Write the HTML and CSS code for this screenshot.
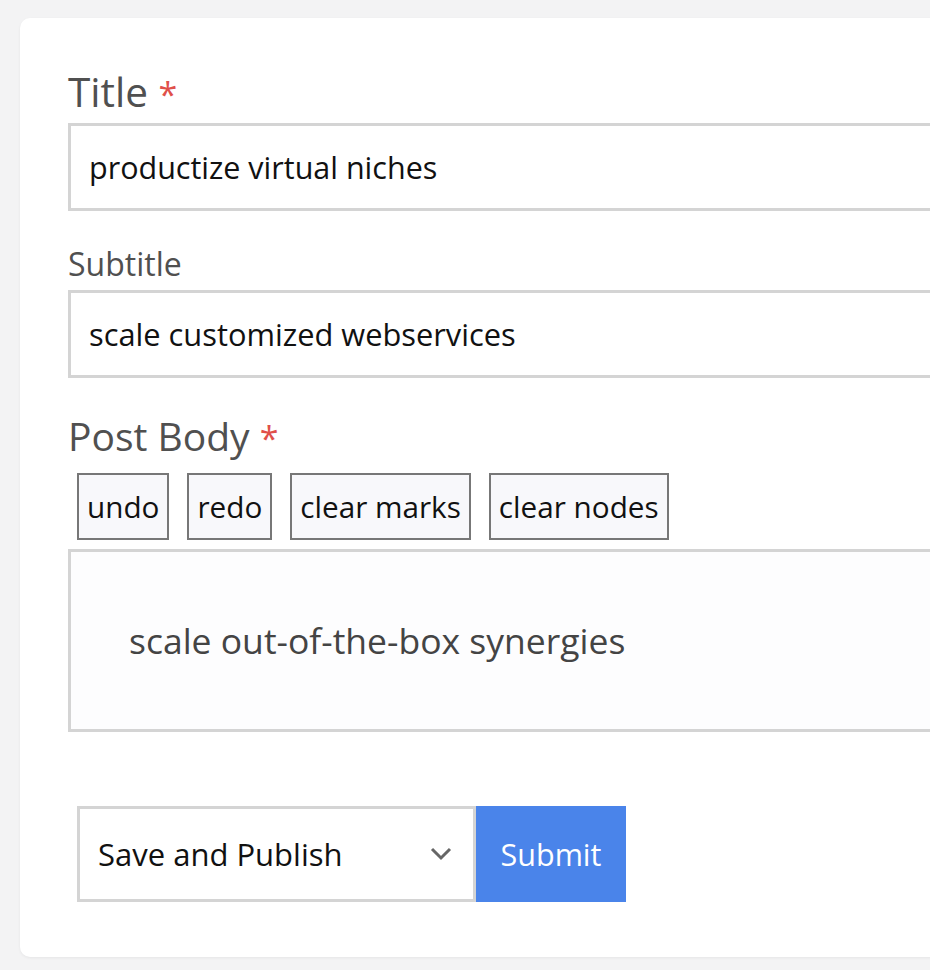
FILE: index.html
```html
<!DOCTYPE html>
<html>
<head>
<meta charset="utf-8">
<link rel="stylesheet" href="styles.css">
</head>
<body>
<div class="card">
  <form class="form">
    <div class="field">
      <label class="label label-lg">Title <span class="req">*</span></label>
      <div class="input">productize virtual niches</div>
    </div>
    <div class="field">
      <label class="label label-sm">Subtitle</label>
      <div class="input input-sub">scale customized webservices</div>
    </div>
    <div class="field">
      <label class="label label-lg label-body">Post Body <span class="req">*</span></label>
      <div class="toolbar">
        <button type="button" class="tool">undo</button>
        <button type="button" class="tool">redo</button>
        <button type="button" class="tool">clear marks</button>
        <button type="button" class="tool">clear nodes</button>
      </div>
      <div class="editor"><p class="editor-text">scale out-of-the-box synergies</p></div>
    </div>
    <div class="actions">
      <div class="select">
        <span>Save and Publish</span>
        <svg class="chev" width="24" height="16" viewBox="0 0 24 16"><polyline points="3,3 12,12 21,3" fill="none" stroke="#666" stroke-width="3"/></svg>
      </div>
      <button type="button" class="submit">Submit</button>
    </div>
  </form>
</div>
</body>
</html>
```

FILE: styles.css
```css
html, body {
  margin: 0;
  padding: 0;
  overflow: hidden;
}
body {
  background: #f3f3f4;
  font-family: "Open Sans", "Lato", sans-serif;
  padding: 18px 0 0 20px;
  height: 970px;
  box-sizing: border-box;
}
.card {
  width: 1000px;
  height: 939px;
  background: #fff;
  border-radius: 10px 0 0 10px;
  box-shadow: 0 1px 3px rgba(0,0,0,0.06);
  box-sizing: border-box;
  padding: 54px 0 0 48px;
}
.form {
  display: flex;
  flex-direction: column;
}
.field {
  display: flex;
  flex-direction: column;
}
.label {
  color: #505050;
  line-height: 1;
  display: block;
}
.label-lg {
  font-size: 40.5px;
  margin-bottom: 10px;
}
.label-sm {
  font-size: 32px;
  margin-top: 37px;
  margin-bottom: 10px;
}
.req {
  color: #e0504a;
  font-size: 34px;
}
.input {
  border: 3px solid #d4d4d4;
  height: 88px;
  box-sizing: border-box;
  display: flex;
  align-items: center;
  padding-left: 18px;
  font-size: 30.5px;
  color: #111;
  width: 950px;
}
.input-sub {
  font-size: 30.8px;
}
.label-body {
  font-size: 39px;
  margin-top: 38px;
  margin-bottom: 18px;
}
.toolbar {
  display: flex;
  gap: 18px;
  padding-left: 9px;
  margin-bottom: 9px;
}
.tool {
  font-family: inherit;
  font-size: 29.7px;
  color: #111;
  background: #f8f8fb;
  border: 2px solid #777;
  height: 67px;
  padding: 0 8px;
  margin: 0;
}
.editor {
  border: 3px solid #d4d4d4;
  background: #fdfdfe;
  height: 183px;
  box-sizing: border-box;
  width: 950px;
  display: flex;
  align-items: center;
  padding-left: 58px;
}
.editor-text {
  margin: 0;
  font-size: 35.5px;
  color: #444;
}
.actions {
  display: flex;
  margin-top: 74px;
  padding-left: 9px;
}
.select {
  width: 399px;
  height: 96px;
  box-sizing: border-box;
  border: 3px solid #d4d4d4;
  display: flex;
  align-items: center;
  justify-content: space-between;
  padding: 0 20px 0 18px;
  font-size: 31px;
  color: #111;
}
.chev {
  display: block;
}
.submit {
  font-family: inherit;
  width: 150px;
  height: 96px;
  border: none;
  background: #4a84ea;
  color: #fff;
  font-size: 30.5px;
  margin: 0;
  padding: 0;
}
```
